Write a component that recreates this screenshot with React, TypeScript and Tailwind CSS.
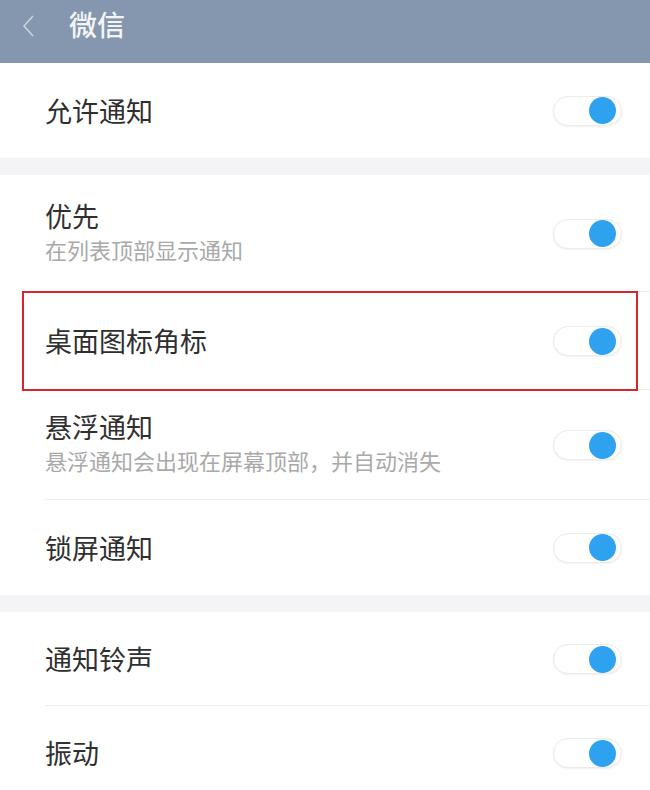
const font = { fontFamily: '"Noto Sans CJK SC", "Noto Sans", sans-serif' };

type Item = { title: string; sub?: string; highlight?: boolean; h: string };

const groups: Item[][] = [
  [{ title: "允许通知", h: "h-[95px]" }],
  [
    { title: "优先", sub: "在列表顶部显示通知", h: "h-[117px]" },
    { title: "桌面图标角标", highlight: true, h: "h-[98px]" },
    { title: "悬浮通知", sub: "悬浮通知会出现在屏幕顶部，并自动消失", h: "h-[110px]" },
    { title: "锁屏通知", h: "h-[95px]" },
  ],
  [
    { title: "通知铃声", h: "h-[94px]" },
    { title: "振动", h: "h-[94px]" },
  ],
];

function Toggle() {
  return (
    <div className="flex h-[30px] w-[69px] items-center justify-end rounded-full border border-[#ebebeb] bg-white pr-[5px] shadow-[0_1px_2px_rgba(0,0,0,0.06)]">
      <div className="h-[27px] w-[27px] rounded-full bg-[#2ea2ef]" />
    </div>
  );
}

function Row({ item, last }: { item: Item; last: boolean }) {
  return (
    <div className={`relative flex items-center ${item.h}`}>
      <div className={`flex flex-1 flex-col pl-[45px] ${item.sub ? "mt-[-6px]" : ""}`}>
        <span className="text-[27px] leading-[36px] text-[#2f2f2f]">{item.title}</span>
        {item.sub && (
          <span className="text-[22px] leading-[30px] text-[#a9a9a9]">{item.sub}</span>
        )}
      </div>
      <div className="pr-[28px]">
        <Toggle />
      </div>
      {!last && <div className="absolute bottom-0 left-[45px] right-0 h-px bg-[#ededed]" />}
      {/* annotation box */}
      {item.highlight && (
        <div className="pointer-events-none absolute -top-[1px] bottom-[-1px] left-[22px] right-[12px] border-2 border-[#d8262c]" />
      )}
    </div>
  );
}

export default function App() {
  return (
    <div className="h-[790px] w-[650px] overflow-hidden bg-white" style={font}>
      {/* header */}
      <div className="flex h-[63px] items-start gap-[33px] bg-[#8497ae] pl-[22px] pt-[5px]">
        <svg width="14" height="34" viewBox="0 0 14 34" className="mt-[4px]">
          <path d="M11 7 L2 17 L11 27" fill="none" stroke="#c9d2de" strokeWidth="1.6" />
        </svg>
        <span className="text-[28px] font-medium leading-[38px] text-[#f3f5f8]">微信</span>
      </div>

      {groups.map((g, gi) => (
        <div key={gi}>
          {gi > 0 && <div className="h-[17px] bg-[#f4f4f6]" />}
          {g.map((item, i) => (
            <Row key={item.title} item={item} last={i === g.length - 1} />
          ))}
        </div>
      ))}
    </div>
  );
}
